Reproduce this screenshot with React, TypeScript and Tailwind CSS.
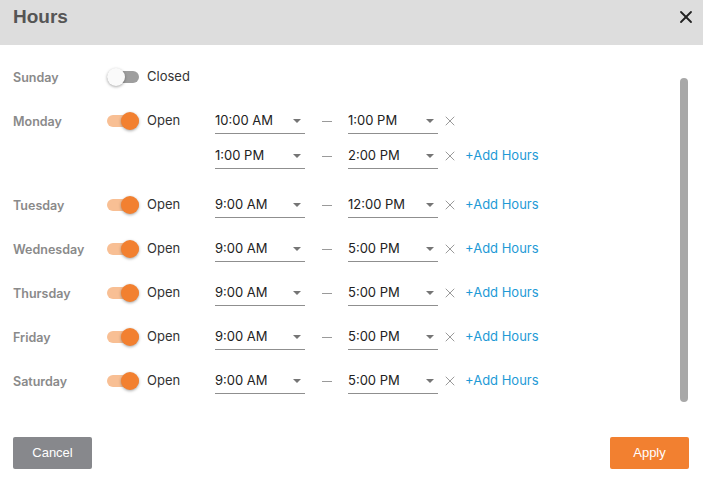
import { X } from "lucide-react";

type Range = [string, string];

interface Day {
	name: string;
	open: boolean;
	ranges: Range[];
}

const DAYS: Day[] = [
	{ name: "Sunday", open: false, ranges: [] },
	{
		name: "Monday",
		open: true,
		ranges: [
			["10:00 AM", "1:00 PM"],
			["1:00 PM", "2:00 PM"],
		],
	},
	{ name: "Tuesday", open: true, ranges: [["9:00 AM", "12:00 PM"]] },
	{ name: "Wednesday", open: true, ranges: [["9:00 AM", "5:00 PM"]] },
	{ name: "Thursday", open: true, ranges: [["9:00 AM", "5:00 PM"]] },
	{ name: "Friday", open: true, ranges: [["9:00 AM", "5:00 PM"]] },
	{ name: "Saturday", open: true, ranges: [["9:00 AM", "5:00 PM"]] },
];

function Toggle({ on }: { on: boolean }) {
	return (
		<div className="relative h-[18px] w-[32px] shrink-0">
			<div
				className={`absolute left-0 right-0 top-[3px] h-[12px] rounded-full ${
					on ? "bg-[#f8bf94]" : "bg-[#9e9e9e]"
				}`}
			/>
			<div
				className={`absolute top-0 h-[18px] w-[18px] rounded-full shadow-[0_1px_3px_rgba(0,0,0,0.35)] ${
					on ? "right-0 bg-[#f28030]" : "left-0 bg-[#fafafa]"
				}`}
			/>
		</div>
	);
}

function TimeSelect({ value }: { value: string }) {
	return (
		<div className="flex h-[26px] w-[90px] items-center justify-between border-b border-[#8f8f8f] text-[13px] text-[#222]">
			<span>{value}</span>
			<span className="mr-[4px] h-0 w-0 border-x-[4px] border-t-[4px] border-x-transparent border-t-[#757575]" />
		</div>
	);
}

function RangeLine({ range, addLink }: { range: Range; addLink: boolean }) {
	return (
		<div className="flex h-[34px] items-center">
			<TimeSelect value={range[0]} />
			<div className="flex w-[43px] justify-center">
				<div className="h-px w-[10px] bg-[#9a9a9a]" />
			</div>
			<TimeSelect value={range[1]} />
			<X size={16} strokeWidth={1.3} className="ml-[4px] text-[#8a8a8a]" />
			{addLink && (
				<span className="ml-[7px] text-[13px] text-[#1e9ad6]">+Add Hours</span>
			)}
		</div>
	);
}

function DayRow({ day }: { day: Day }) {
	const multi = day.ranges.length > 1;
	return (
		<div className={`flex items-start ${multi ? "pb-[5px]" : ""}`}>
			<div className="flex h-[34px] w-[94px] items-center pt-[3px] text-[12.5px] font-semibold text-[#8a8a8a]">
				{day.name}
			</div>
			<div className="flex h-[34px] w-[108px] items-center gap-[8px]">
				<Toggle on={day.open} />
				<span className="text-[13px] text-[#333]">{day.open ? "Open" : "Closed"}</span>
			</div>
			<div className="flex flex-col gap-px">
				{day.ranges.map((r, i) => (
					<RangeLine key={i} range={r} addLink={i === day.ranges.length - 1 && i > 0 || !multi} />
				))}
			</div>
		</div>
	);
}

export default function App() {
	return (
		<div
			className="flex h-[480px] w-[703px] flex-col bg-white"
			style={{ fontFamily: "Inter, 'Noto Sans', sans-serif" }}
		>
			{/* Header */}
			<div className="flex h-[45px] shrink-0 items-start justify-between bg-[#dddddd] pl-[13px] pr-[7px] pt-[5px]">
				<h2
					className="text-[19px] font-bold leading-[24px] text-[#555]"
					style={{ fontFamily: "'Liberation Sans', Arial, sans-serif" }}
				>
					Hours
				</h2>
				<X size={20} strokeWidth={2.2} className="mt-[2px] text-[#222]" />
			</div>

			{/* Body */}
			<div className="flex flex-1 pt-[15px]">
				<div className="flex flex-1 flex-col gap-[10px] pl-[13px]">
					{DAYS.map((d) => (
						<DayRow key={d.name} day={d} />
					))}
				</div>
				<div className="w-[23px] shrink-0 pt-[18px]">
					<div className="h-[324px] w-[8px] rounded-full bg-[#a8a8a8]" />
				</div>
			</div>

			{/* Footer */}
			<div
				className="flex shrink-0 justify-between px-[13px] pb-[11px]"
				style={{ fontFamily: "'Liberation Sans', Arial, sans-serif" }}
			>
				<button
					type="button"
					className="h-[32px] w-[79px] rounded-[2px] bg-[#87888c] text-[13px] text-white"
				>
					Cancel
				</button>
				<button
					type="button"
					className="mr-px h-[32px] w-[79px] rounded-[2px] bg-[#f28030] text-[13px] text-white"
				>
					Apply
				</button>
			</div>
		</div>
	);
}
